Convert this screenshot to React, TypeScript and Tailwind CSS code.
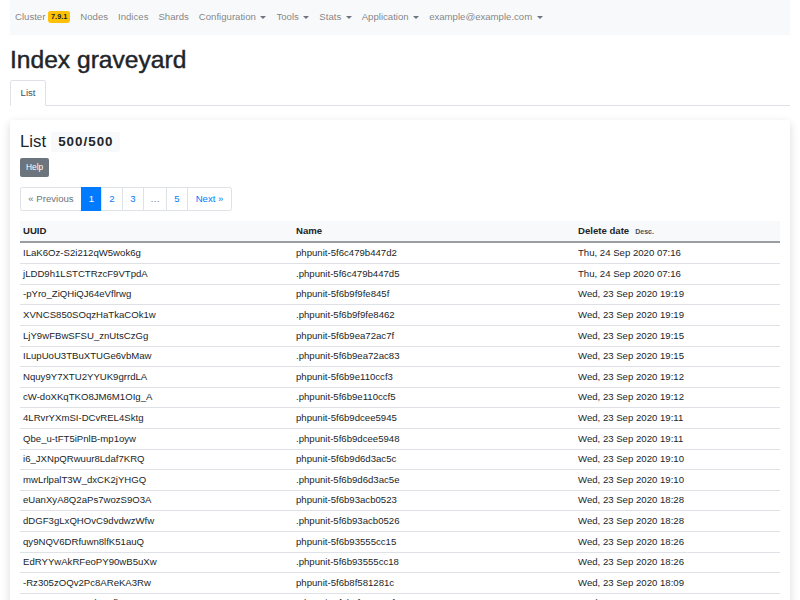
import React from "react";

const rows: [string, string, string][] = [
  ["ILaK6Oz-S2i212qW5wok6g", "phpunit-5f6c479b447d2", "Thu, 24 Sep 2020 07:16"],
  ["jLDD9h1LSTCTRzcF9VTpdA", ".phpunit-5f6c479b447d5", "Thu, 24 Sep 2020 07:16"],
  ["-pYro_ZiQHiQJ64eVflrwg", "phpunit-5f6b9f9fe845f", "Wed, 23 Sep 2020 19:19"],
  ["XVNCS850SOqzHaTkaCOk1w", ".phpunit-5f6b9f9fe8462", "Wed, 23 Sep 2020 19:19"],
  ["LjY9wFBwSFSU_znUtsCzGg", "phpunit-5f6b9ea72ac7f", "Wed, 23 Sep 2020 19:15"],
  ["ILupUoU3TBuXTUGe6vbMaw", ".phpunit-5f6b9ea72ac83", "Wed, 23 Sep 2020 19:15"],
  ["Nquy9Y7XTU2YYUK9grrdLA", "phpunit-5f6b9e110ccf3", "Wed, 23 Sep 2020 19:12"],
  ["cW-doXKqTKO8JM6M1OIg_A", ".phpunit-5f6b9e110ccf5", "Wed, 23 Sep 2020 19:12"],
  ["4LRvrYXmSI-DCvREL4Sktg", "phpunit-5f6b9dcee5945", "Wed, 23 Sep 2020 19:11"],
  ["Qbe_u-tFT5iPnlB-mp1oyw", ".phpunit-5f6b9dcee5948", "Wed, 23 Sep 2020 19:11"],
  ["i6_JXNpQRwuur8Ldaf7KRQ", "phpunit-5f6b9d6d3ac5c", "Wed, 23 Sep 2020 19:10"],
  ["mwLrlpalT3W_dxCK2jYHGQ", ".phpunit-5f6b9d6d3ac5e", "Wed, 23 Sep 2020 19:10"],
  ["eUanXyA8Q2aPs7wozS9O3A", "phpunit-5f6b93acb0523", "Wed, 23 Sep 2020 18:28"],
  ["dDGF3gLxQHOvC9dvdwzWfw", ".phpunit-5f6b93acb0526", "Wed, 23 Sep 2020 18:28"],
  ["qy9NQV6DRfuwn8lfK51auQ", "phpunit-5f6b93555cc15", "Wed, 23 Sep 2020 18:26"],
  ["EdRYYwAkRFeoPY90wB5uXw", ".phpunit-5f6b93555cc18", "Wed, 23 Sep 2020 18:26"],
  ["-Rz305zOQv2Pc8AReKA3Rw", "phpunit-5f6b8f581281c", "Wed, 23 Sep 2020 18:09"],
  ["_oRmFGv4Q7KdJBqfkyuUB2", ".phpunit-5f6b8f581281f", "Wed, 23 Sep 2020 18:09"],
];

function Caret() {
  return (
    <span className="ml-[4.5px] inline-block w-0 h-0 border-l-[3px] border-r-[3px] border-t-[3px] border-l-transparent border-r-transparent border-t-[#6c757d] align-[1.5px]" />
  );
}

function NavLink({ children, caret }: { children: React.ReactNode; caret?: boolean }) {
  return (
    <span className="px-[5px] text-[rgba(0,0,0,0.5)] whitespace-nowrap">
      {children}
      {caret && <Caret />}
    </span>
  );
}

export default function App() {
  return (
    <div
      className="min-h-[600px] bg-white px-[10px] text-[#212529] text-[9.6px] leading-[1.5]"
      style={{ fontFamily: '"Liberation Sans", Arial, sans-serif' }}
    >
      <nav className="h-[35px] bg-[#f8f9fa] flex items-center text-[9.6px]">
        <span className="pl-[5px] pr-[5px] text-[rgba(0,0,0,0.5)] whitespace-nowrap">
          Cluster{" "}
          <span className="inline-block bg-[#ffc107] text-[#212529] font-bold text-[7.3px] leading-none px-[3px] py-[2px] rounded-[2.4px] align-[1px]">
            7.9.1
          </span>
        </span>
        <NavLink>Nodes</NavLink>
        <NavLink>Indices</NavLink>
        <NavLink>Shards</NavLink>
        <NavLink caret>Configuration</NavLink>
        <NavLink caret>Tools</NavLink>
        <NavLink caret>Stats</NavLink>
        <NavLink caret>Application</NavLink>
        <NavLink caret>example@example.com</NavLink>
      </nav>

      <h1 className="mt-[11px] mb-[5px] text-[24.6px] leading-[28.8px] font-normal [-webkit-text-stroke:0.45px_#212529]">
        Index graveyard
      </h1>

      <div className="flex border-b border-[#dee2e6]">
        <div className="-mb-px bg-white border border-[#dee2e6] border-b-white rounded-t-[2.4px] px-[9.6px] py-[4.8px] text-[#495057] leading-[14.4px]">
          List
        </div>
      </div>

      <div className="mt-[14px] bg-white rounded-[2.4px] shadow-[0_3px_10px_rgba(0,0,0,0.15)] px-[10px] pt-[12px] pb-[10px]">
        <div className="flex items-center">
          <h3 className="text-[16.8px] leading-[20px] font-medium">List</h3>
          <span className="ml-[5px] bg-[#f8f9fa] font-bold text-[13.4px] leading-none pl-[7px] pr-[6px] pt-[3.5px] pb-[3.5px] rounded-[2.4px] tracking-[1px]">
            500/500
          </span>
        </div>

        <div className="mt-[6px]">
          <span className="inline-block bg-[#6c757d] text-white text-[8.4px] leading-[12.6px] px-[6px] py-[3.2px] rounded-[2px]">
            Help
          </span>
        </div>

        <div className="mt-[10px] flex">
          <div className="flex h-[24px] text-[9.6px] leading-[12px] whitespace-nowrap">
            <span className="flex items-center justify-center w-[62px] border border-[#dee2e6] rounded-l-[2.4px] text-[#6c757d]">
              « Previous
            </span>
            <span className="flex items-center justify-center w-[21px] bg-[#007bff] border border-[#007bff] text-white -ml-px">
              1
            </span>
            <span className="flex items-center justify-center w-[22px] border border-[#dee2e6] text-[#007bff] -ml-px">2</span>
            <span className="flex items-center justify-center w-[22px] border border-[#dee2e6] text-[#007bff] -ml-px">3</span>
            <span className="flex items-center justify-center w-[24px] border border-[#dee2e6] text-[#6c757d] -ml-px">…</span>
            <span className="flex items-center justify-center w-[22px] border border-[#dee2e6] text-[#007bff] -ml-px">5</span>
            <span className="flex items-center justify-center w-[45px] border border-[#dee2e6] rounded-r-[2.4px] text-[#007bff] -ml-px">
              Next »
            </span>
          </div>
        </div>

        <div className="mt-[10px]">
          <div className="grid grid-cols-[273px_282px_1fr] bg-[#f8f9fa] border-b-2 border-[#9a9ea3] font-bold h-[21.5px] items-center">
            <div className="px-[3px]">UUID</div>
            <div className="px-[3px]">Name</div>
            <div className="px-[3px] flex items-baseline">
              Delete date
              <span className="ml-[6px] text-[7px] text-[#495057]">Desc.</span>
            </div>
          </div>
          {rows.map((r, i) => (
            <div
              key={i}
              className={`grid grid-cols-[273px_282px_1fr] h-[20.6px] items-center ${i > 0 ? "border-t border-[#dee2e6]" : ""}`}
            >
              <div className="px-[3px] whitespace-nowrap">{r[0]}</div>
              <div className="px-[3px] whitespace-nowrap">{r[1]}</div>
              <div className="px-[3px] whitespace-nowrap">{r[2]}</div>
            </div>
          ))}
        </div>
      </div>
    </div>
  );
}
